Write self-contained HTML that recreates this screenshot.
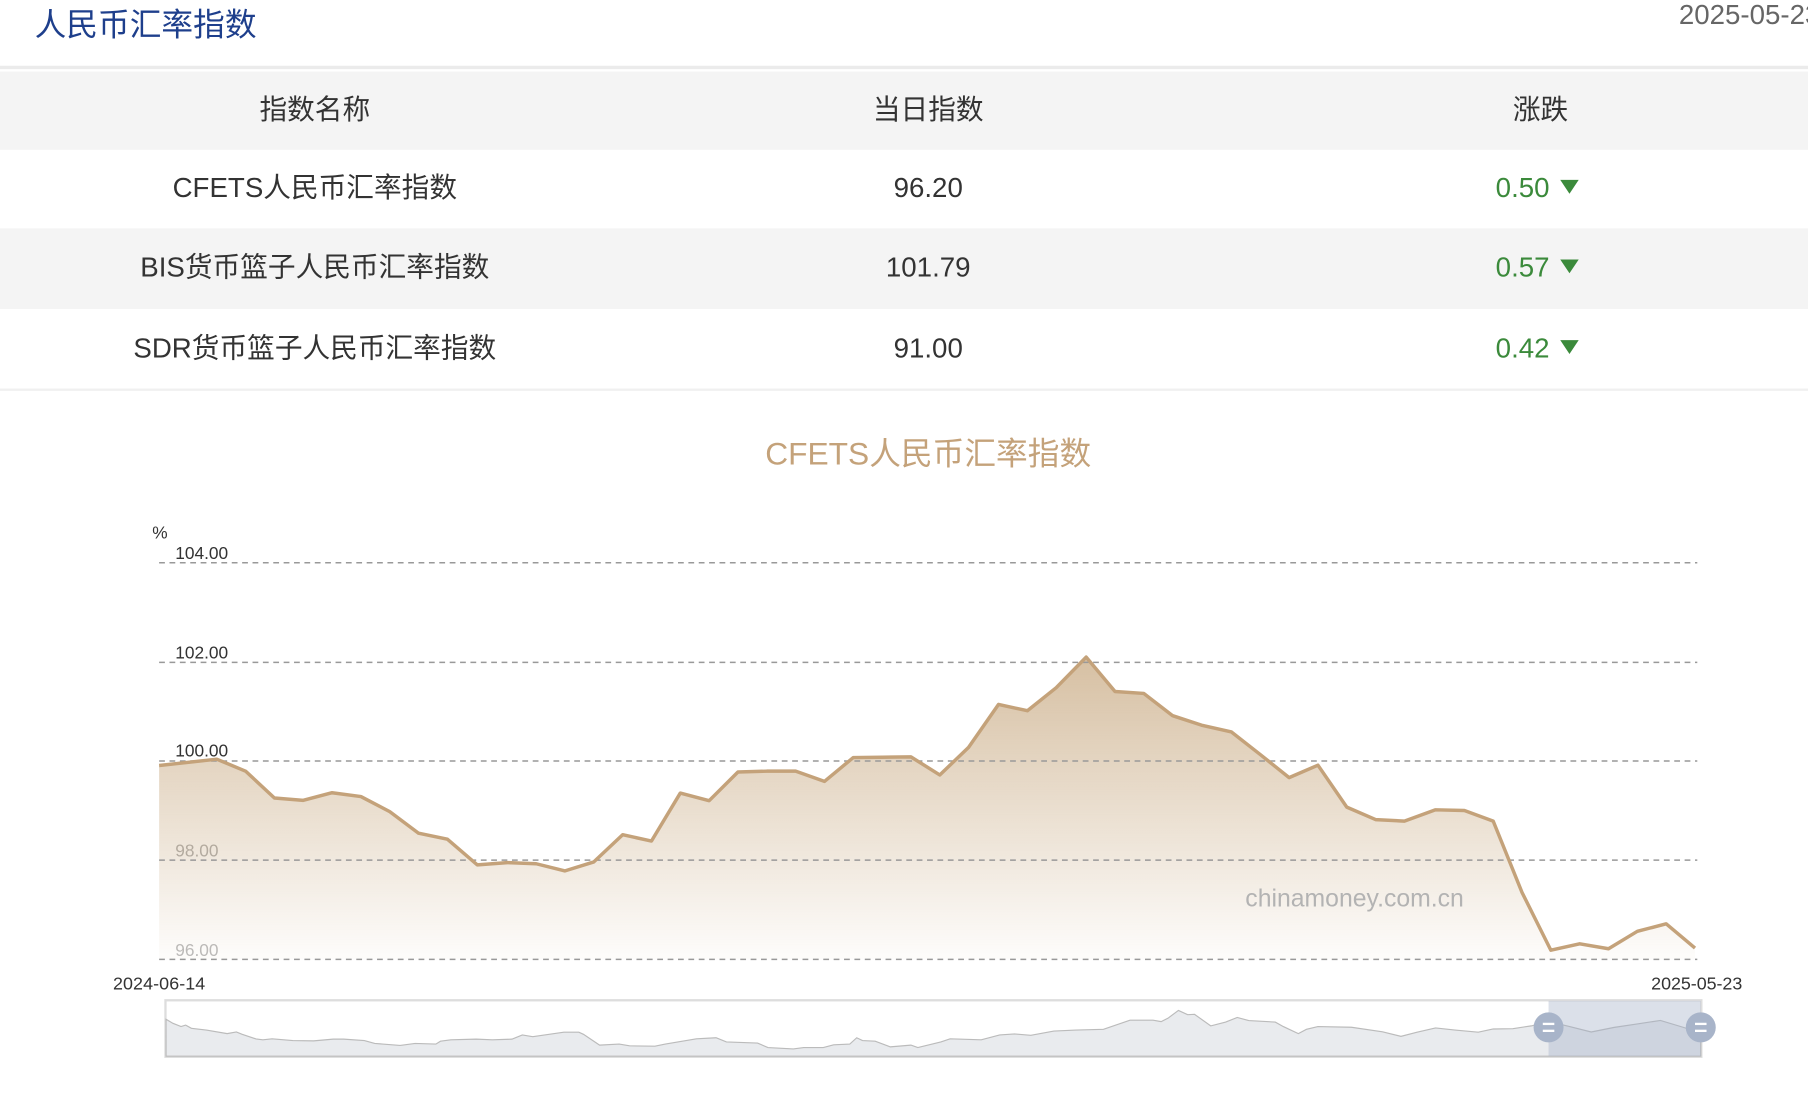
<!DOCTYPE html>
<html><head><meta charset="utf-8">
<style>
html,body{margin:0;padding:0;background:#fff;overflow:hidden;width:1808px;height:1094px}
#w{position:absolute;left:0;top:0;width:1568px;height:949px;transform-origin:0 0;transform:scale(1.15306);font-family:"Liberation Sans","Noto Sans CJK SC",sans-serif}
.t{position:absolute;white-space:nowrap}
.row{position:absolute;left:0;width:1568px}
.c{position:absolute;top:0;transform:translateX(-50%);font-size:24px;color:#333;white-space:nowrap}
.g{color:#3b8a3b}
.tri{display:inline-block;width:0;height:0;border-left:8px solid transparent;border-right:8px solid transparent;border-top:12px solid #3b8a3b;margin-left:9px;vertical-align:3px}
</style></head><body><div id="w">
<div class="t" style="left:30px;top:2px;font-size:27.5px;line-height:40px;color:#1e3f8c">人民币汇率指数</div>
<div class="t" style="left:1456px;top:0px;font-size:24px;line-height:28px;color:#666">2025-05-23</div>
<div class="row" style="top:57px;height:3px;background:#ebebeb"></div>
<div class="row" style="top:62px;height:68px;background:#f4f4f4">
 <div class="c" style="left:273px;line-height:68px">指数名称</div>
 <div class="c" style="left:805px;line-height:68px">当日指数</div>
 <div class="c" style="left:1336px;line-height:68px">涨跌</div>
</div>
<div class="row" style="top:130px;height:68px;background:#fff">
 <div class="c" style="left:273px;line-height:68px">CFETS人民币汇率指数</div>
 <div class="c" style="left:805px;line-height:68px">96.20</div>
 <div class="c g" style="left:1333px;line-height:68px">0.50<span class="tri"></span></div>
</div>
<div class="row" style="top:198px;height:70px;background:#f4f4f4">
 <div class="c" style="left:273px;line-height:70px">BIS货币篮子人民币汇率指数</div>
 <div class="c" style="left:805px;line-height:70px">101.79</div>
 <div class="c g" style="left:1333px;line-height:70px">0.57<span class="tri"></span></div>
</div>
<div class="row" style="top:268px;height:69px;background:#fff;border-bottom:2px solid #f0f0f0">
 <div class="c" style="left:273px;line-height:69px">SDR货币篮子人民币汇率指数</div>
 <div class="c" style="left:805px;line-height:69px">91.00</div>
 <div class="c g" style="left:1333px;line-height:69px">0.42<span class="tri"></span></div>
</div>
<div class="t" style="left:805px;top:374px;line-height:40px;transform:translateX(-50%);font-size:27.5px;color:#c4a27a">CFETS人民币汇率指数</div>
<svg style="position:absolute;left:0;top:0" width="1568" height="949">
<defs><linearGradient id="gr" x1="0" y1="570" x2="0" y2="832" gradientUnits="userSpaceOnUse">
<stop offset="0" stop-color="#c9ab84" stop-opacity="0.75"/><stop offset="1" stop-color="#c9ab84" stop-opacity="0.03"/></linearGradient></defs>
<g font-family="Liberation Sans,sans-serif" font-size="15">
<text x="132" y="467" fill="#333">%</text>
<text x="152" y="485" fill="#333">104.00</text>
<text x="152" y="571" fill="#333">102.00</text>
<text x="152" y="656" fill="#333">100.00</text>
<text x="152" y="743" fill="#aaa">98.00</text>
<text x="152" y="829" fill="#bbb">96.00</text>
</g>
<g font-family="Liberation Sans,sans-serif" font-size="15.5" fill="#333">
<text x="98" y="858" textLength="80">2024-06-14</text>
<text x="1432" y="858" textLength="79">2025-05-23</text>
</g>
<polygon fill="url(#gr)" points="138,663.9 188,658.4 213,668.8 238,692.1 263,694.1 288,687.5 313,690.8 338,703.9 363,722.6 388,727.8 414,750.1 440,748.1 465,749.1 490,755.3 515,747.5 540,723.9 565,729.4 590,687.8 615,694.4 640,669.5 665,668.8 690,668.8 715,677.7 740,657 765,656.7 790,656.4 815,672.1 840,648.2 866,610.9 891,616.4 916,596.4 942,569.9 967,599.7 992,601.4 1017,620.7 1042,628.9 1068,634.8 1093,654.4 1118,674.4 1143,663.6 1168,700 1193,710.8 1218,712.1 1245,702.3 1270,702.9 1295,712.1 1320,774 1345,824.1 1370,818.5 1395,822.8 1420,807.7 1445,801.2 1470,822.2 1470,832 138,832"/>
<g stroke="#999" stroke-width="1.3" stroke-dasharray="5,4">
<line x1="138" y1="488" x2="1472" y2="488"/><line x1="138" y1="574.5" x2="1472" y2="574.5"/><line x1="138" y1="660" x2="1472" y2="660"/><line x1="138" y1="746" x2="1472" y2="746"/><line x1="138" y1="832" x2="1472" y2="832"/></g>
<polyline fill="none" stroke="#c4a27a" stroke-width="3" stroke-linejoin="round" points="138,663.9 188,658.4 213,668.8 238,692.1 263,694.1 288,687.5 313,690.8 338,703.9 363,722.6 388,727.8 414,750.1 440,748.1 465,749.1 490,755.3 515,747.5 540,723.9 565,729.4 590,687.8 615,694.4 640,669.5 665,668.8 690,668.8 715,677.7 740,657 765,656.7 790,656.4 815,672.1 840,648.2 866,610.9 891,616.4 916,596.4 942,569.9 967,599.7 992,601.4 1017,620.7 1042,628.9 1068,634.8 1093,654.4 1118,674.4 1143,663.6 1168,700 1193,710.8 1218,712.1 1245,702.3 1270,702.9 1295,712.1 1320,774 1345,824.1 1370,818.5 1395,822.8 1420,807.7 1445,801.2 1470,822.2"/>
<text x="1080" y="786" font-family="Liberation Sans,sans-serif" font-size="21.5" fill="#b3b3b3">chinamoney.com.cn</text>
<rect x="143.5" y="867.5" width="1332" height="49" fill="#fff" stroke="#ddd" stroke-width="2"/>
<polygon fill="#e9ebee" stroke="#bbb" stroke-width="1" points="144,884 150,887.5 157,890.3 161,889 166,891.8 179,893.3 197,896.4 205,895 210,897 222,901 228,901.8 236,900.9 254,902.4 272,902.7 289,901.2 298,901.2 316,902.4 325,904.9 347,906.7 360,904.9 378,905.5 382,903 391,901.8 413,901.2 427,901.8 444,901.2 453,897.6 462,899.1 489,895.2 502,895.2 506,897 520,906.4 537,905.5 546,907 568,907.3 577,905.5 604,900.9 621,900 630,903.6 657,904.6 666,908.5 688,909.7 697,908.5 714,908.5 723,906.1 737,905.5 743,900 748,902.4 759,903 772,907.9 790,906.4 796,908.5 816,903.6 824,900.9 851,901.8 867,897.6 880,896.7 894,897.9 914,894.2 933,893.3 957,892.7 980,884.8 1000,884.8 1007,886 1013,883 1022,876.3 1030,880 1036,879.7 1050,889.7 1063,886.4 1073,882.4 1083,885.1 1106,886.4 1113,890.3 1126,896.4 1133,892.7 1143,890.3 1172,890.9 1199,894.8 1215,898.8 1229,895.2 1245,891.5 1262,893.3 1282,895.2 1295,892.4 1312,892.1 1328,889.7 1343,886 1360,890 1380,895 1400,891 1420,888 1440,885 1460,891 1475,896 1475,916 144,916"/>
<rect x="1343" y="868" width="132" height="48" fill="#a5b2c9" fill-opacity="0.4"/>
<g fill="#a8b4c9"><circle cx="1343" cy="891" r="13"/><circle cx="1475" cy="891" r="13"/></g>
<g stroke="#fff" stroke-width="2"><line x1="1338" y1="888" x2="1348" y2="888"/><line x1="1338" y1="894" x2="1348" y2="894"/><line x1="1470" y1="888" x2="1480" y2="888"/><line x1="1470" y1="894" x2="1480" y2="894"/></g>
</svg>
</div></body></html>
